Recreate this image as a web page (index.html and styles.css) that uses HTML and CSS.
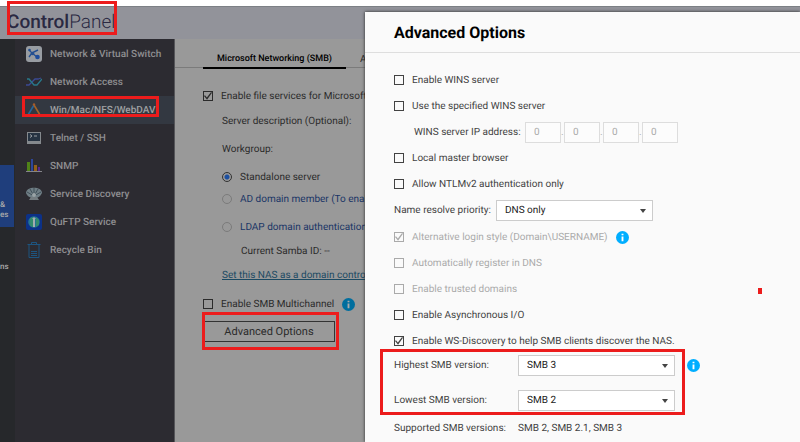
FILE: index.html
```html
<!DOCTYPE html>
<html lang="en">
<head>
<meta charset="UTF-8">
<meta name="viewport" content="width=device-width, initial-scale=1.0">
<title>Control Panel</title>
<link rel="stylesheet" href="styles.css">
</head>
<body>

<header class="topbar">
  <h1 class="brand"><b>Control</b>Panel</h1>
  <div class="mark mark-brand"></div>
</header>

<div class="layout">
  <div class="rail">
    <div class="rail-item active"><span>&amp;</span><span>es</span></div>
    <div class="rail-item"><span>ns</span></div>
  </div>

  <nav class="sidebar">
    <a class="nav-item" href="#">
      <svg class="icon" viewBox="0 0 16 16"><rect width="16" height="16" rx="3" fill="#989ca2"/><path d="M3 4l3 3 6-3M6 7l-3 4M6 7l5 4" fill="none" stroke="#244f91" stroke-width="1.4"/><circle cx="3.500" cy="4" r="1.300" fill="#244f91"/><circle cx="6.500" cy="7.500" r="1.800" fill="#244f91"/><circle cx="11.500" cy="11" r="2.300" fill="#1d4c9c"/></svg>
      Network &amp; Virtual Switch
    </a>
    <a class="nav-item" href="#">
      <svg class="icon" viewBox="0 0 16 16" fill="none" stroke-width="1.300"><path d="M0 11h3l6-6h3l3-1" stroke="#3b4a94"/><path d="M1 5h2l5 6h3l5-6" stroke="#28798a"/></svg>
      Network Access
    </a>
    <a class="nav-item selected" href="#">
      <svg class="icon" viewBox="0 0 16 16" fill="none" stroke-width="1.600"><path d="M8 3L2 13" stroke="#27659a"/><path d="M8 3l6 10" stroke="#a46227"/><path d="M2 13.500h12" stroke="#3c8355"/><circle cx="8" cy="2.500" r="1.200" fill="#a65a2b"/><circle cx="2" cy="13.500" r="1.200" fill="#2867a0"/><circle cx="14" cy="13.500" r="1.200" fill="#a38023"/></svg>
      Win/Mac/NFS/WebDAV
      <span class="mark mark-nav"></span>
    </a>
    <a class="nav-item" href="#">
      <svg class="icon" viewBox="0 0 16 16"><path d="M1 2h14v12H1z" fill="#85898d"/><path d="M2 3h12v8H2z" fill="#263342"/><path d="M4 4.500l2 1.500-2 1.500M8 6h3" fill="none" stroke="#9b9fa4"/></svg>
      Telnet / SSH
    </a>
    <a class="nav-item" href="#">
      <svg class="icon" viewBox="0 0 16 16"><path d="M1 4h3v9H1z" fill="#4f8218"/><path d="M5 1h2v12H5z" fill="#2d469b"/><path d="M8 7h3v6H8z" fill="#946019"/><path d="M12 9h2v4h-2z" fill="#582691"/><path d="M0 13h16v1H0z" fill="#85858a"/></svg>
      SNMP
    </a>
    <a class="nav-item" href="#">
      <svg class="icon" viewBox="0 0 16 16"><path d="M0 7c0-7 16-7 16 0-2 4-4 5-8 5S1 10 0 7z" fill="#6f7e85"/><path d="M8 10L1 6M8 10L4 3M8 10V2M8 10l4-7M8 10l7-4" stroke="#415059" fill="none"/><circle cx="8" cy="9" r="2" fill="#9aa3a6"/><path d="M5 11h6l2 3H3z" fill="#747c80"/></svg>
      Service Discovery
    </a>
    <a class="nav-item" href="#">
      <svg class="icon" viewBox="0 0 16 16"><rect width="16" height="16" rx="2" fill="#0c3188"/><circle cx="8" cy="8" r="5.800" fill="#257593"/><path d="M4 4l3-1v10l-3-1zM10 3l3 3v5l-3 2z" fill="#338b6d"/><path d="M8 3l2 2H9v8H7V5H6z" fill="#a1acaf"/></svg>
      QuFTP Service
    </a>
    <a class="nav-item" href="#">
      <svg class="icon" viewBox="0 0 16 16" fill="none" stroke="#1d5580"><path d="M1.500 2.500h13M5.500 2V.5h5V2M3 3v12.500h10V3"/><path d="M5 9.500h6M5 11.500h6M5 13.500h6"/></svg>
      Recycle Bin
    </a>
  </nav>

  <main class="content">
    <div class="tabs">
      <button class="tab current">Microsoft Networking (SMB)</button>
      <button class="tab">Apple Networking</button>
    </div>
    <form class="share-form">
      <label class="check services"><input type="checkbox" checked>Enable file services for Microsoft Networking</label>
      <div class="field">Server description (Optional):</div>
      <div class="field">Workgroup:</div>
      <label class="choice"><input type="radio" name="role" checked>Standalone server</label>
      <label class="choice blue"><input type="radio" name="role">AD domain member (To enable)</label>
      <label class="choice blue ldap"><input type="radio" name="role">LDAP domain authentication</label>
      <div class="samba">Current Samba ID: --</div>
      <a class="domain-link" href="#">Set this NAS as a domain controller</a>
      <div class="multi">
        <label class="check"><input type="checkbox">Enable SMB Multichannel</label>
        <svg class="info" viewBox="0 0 14 14"><circle cx="7" cy="7" r="7" fill="#006e9e"/><path d="M6 3h2v1.500H6zM6 6h2v5H6z" fill="#aaa"/></svg>
      </div>
      <div class="advanced">
        <button type="button" class="advanced-button">Advanced Options</button>
        <div class="mark mark-advanced"></div>
      </div>
    </form>
  </main>
</div>

<section class="dialog" role="dialog" aria-labelledby="dialog-title">
  <h2 class="dialog-title" id="dialog-title">Advanced Options</h2>
  <form class="options">
    <label class="check row"><input type="checkbox">Enable WINS server</label>
    <label class="check row"><input type="checkbox">Use the specified WINS server</label>
    <div class="row ip-row">
      <label for="ip-1">WINS server IP address:</label>
      <div class="ip">
        <input id="ip-1" type="text" value="0" disabled><span>.</span><input type="text" value="0" aria-label="Second part" disabled><span>.</span><input type="text" value="0" aria-label="Third part" disabled><span>.</span><input type="text" value="0" aria-label="Fourth part" disabled>
      </div>
    </div>
    <label class="check row"><input type="checkbox">Local master browser</label>
    <label class="check row"><input type="checkbox">Allow NTLMv2 authentication only</label>
    <div class="row name-row">
      <label for="priority">Name resolve priority:</label>
      <div class="select"><select id="priority"><option>DNS only</option></select></div>
    </div>
    <div class="row">
      <label class="check off"><input type="checkbox" checked disabled>Alternative login style (Domain\USERNAME)</label>
      <svg class="info" viewBox="0 0 14 14"><circle cx="7" cy="7" r="7" fill="#00aeff"/><path d="M6 3h2v1.500H6zM6 6h2v5H6z" fill="#fff"/></svg>
    </div>
    <label class="check row off"><input type="checkbox" disabled>Automatically register in DNS</label>
    <label class="check row off"><input type="checkbox" disabled>Enable trusted domains</label>
    <label class="check row"><input type="checkbox">Enable Asynchronous I/O</label>
    <label class="check row"><input type="checkbox" checked>Enable WS-Discovery to help SMB clients discover the NAS.</label>
    <div class="versions">
      <div class="version">
        <label for="highest">Highest SMB version:</label>
        <div class="select"><select id="highest"><option>SMB 3</option></select></div>
        <svg class="info" viewBox="0 0 14 14"><circle cx="7" cy="7" r="7" fill="#00aeff"/><path d="M6 3h2v1.500H6zM6 6h2v5H6z" fill="#fff"/></svg>
      </div>
      <div class="version">
        <label for="lowest">Lowest SMB version:</label>
        <div class="select"><select id="lowest"><option>SMB 2</option></select></div>
      </div>
      <div class="mark mark-versions"></div>
    </div>
    <div class="version supported"><span class="version-name">Supported SMB versions:</span><span>SMB 2, SMB 2.1, SMB 3</span></div>
  </form>
  <div class="red-dot"></div>
</section>

</body>
</html>
```
FILE: styles.css
```css
* {
  box-sizing: border-box;
}

body {
  position: relative;
  display: flex;
  flex-direction: column;
  height: 100vh;
  margin: 0;
  padding-top: 6px;
  overflow: hidden;
  background: #fff;
  color: #424242;
  font: 10px/15px Roboto, "Liberation Sans", sans-serif;
  text-rendering: geometricPrecision;
  white-space: nowrap;
}

button, input, select {
  margin: 0;
  font: inherit;
  color: inherit;
  text-rendering: inherit;
}

/* red highlight frames */
.mark {
  position: absolute;
  border: 3px solid #ec1c1c;
  pointer-events: none;
}

.topbar {
  position: relative;
  flex: none;
  height: 33px;
  padding-left: 7px;
  border-top: 1px solid #7c8085;
  background: #92939a;
}

.brand {
  margin: 0;
  color: #2a2942;
  font-size: 19px;
  font-weight: 300;
  line-height: 30px;
}

.brand b {
  font-weight: 500;
}

.mark-brand {
  top: -6px;
  left: 7px;
  width: 110px;
  height: 34px;
}

.layout {
  display: flex;
  flex: 1;
  min-height: 0;
}

.rail {
  flex: none;
  width: 15px;
  padding-top: 126px;
  overflow: hidden;
  background: #26282b;
  color: #aaa;
  font-size: 8px;
  font-weight: 500;
  line-height: 10px;
}

.rail-item {
  display: flex;
  flex-direction: column;
  align-items: flex-start;
  justify-content: flex-end;
  width: 14px;
  height: 45px;
}

.rail-item.active {
  height: 62px;
  padding-bottom: 7px;
  background: #1f3e7c;
}

.sidebar {
  flex: none;
  width: 160px;
  padding-top: 1px;
  border-right: 1px solid #555559;
  background: #2c2b31;
}

.nav-item {
  position: relative;
  display: flex;
  align-items: center;
  gap: 8px;
  height: 28px;
  padding-left: 11px;
  color: #8f8f91;
  font-weight: 500;
  text-decoration: none;
}

.nav-item.selected {
  background: #333841;
  color: #a0a1a3;
}

.icon {
  width: 16px;
  height: 16px;
}

.mark-nav {
  top: 0;
  left: 7px;
  width: 137px;
  height: 21px;
}

.content {
  flex: 1;
  min-width: 0;
  overflow: hidden;
  background: #999;
  color: #2b2b2b;
}

.tabs {
  display: flex;
  height: 29px;
  padding: 0 28px;
  border-bottom: 1px solid #7b7b7b;
}

.tab {
  height: 30px;
  padding: 12px 14px 0;
  border: 0;
  border-bottom: 2px solid transparent;
  background: none;
}

.tab.current {
  border-color: #000;
  color: #000;
  font-size: 9px;
  font-weight: 500;
}

.share-form {
  display: flex;
  flex-direction: column;
  align-items: flex-start;
  padding: 14px 28px 0;
}

.check {
  display: flex;
  align-items: center;
  gap: 8px;
}

input[type="checkbox"] {
  flex: none;
  width: 10px;
  height: 10px;
  appearance: none;
  border: 1px solid currentColor;
}

input[type="checkbox"]:checked::before {
  content: "";
  display: block;
  width: 8px;
  height: 8px;
  background: currentColor;
  clip-path: polygon(0 50%, 12% 40%, 36% 70%, 88% 0, 100% 8%, 38% 96%);
}

.services {
  height: 28px;
}

.field {
  height: 28px;
  padding-left: 19px;
  line-height: 24px;
}

.choice {
  display: flex;
  align-items: center;
  gap: 8px;
  height: 22px;
  padding-left: 19px;
}

.choice.blue {
  color: #1a3566;
}

.choice.ldap {
  height: 34px;
}

input[type="radio"] {
  width: 10px;
  height: 10px;
  appearance: none;
  border: 1px solid #7b7b7b;
  border-radius: 50%;
}

input[type="radio"]:checked {
  border-color: #333;
  background: radial-gradient(circle, #1c4fa0 2px, transparent 3px);
}

.samba {
  padding-left: 38px;
}

.domain-link {
  margin: 9px 0 13px 19px;
  color: #1c4a63;
}

.multi {
  display: flex;
  align-items: center;
  gap: 8px;
  height: 16px;
}

.info {
  flex: none;
  width: 13px;
  height: 13px;
}

.advanced {
  position: relative;
  padding-top: 9px;
}

.advanced-button {
  width: 132px;
  height: 21px;
  padding: 0;
  border: 1px solid #333;
  background: none;
  font-size: 11px;
}

.mark-advanced {
  top: 0;
  left: -1px;
  width: 137px;
  height: 38px;
}

/* dialog over the page */
.dialog {
  position: absolute;
  top: 12px;
  right: 0;
  bottom: 0;
  left: 365px;
  background: #fafafa;
  box-shadow: 0 0 3px #222;
}

.dialog-title {
  height: 41px;
  margin: 0;
  padding-left: 29px;
  border-bottom: 1px solid #dedede;
  color: #000;
  font-size: 16px;
  font-weight: 700;
  line-height: 41px;
}

.options {
  padding: 14px 29px 0;
}

.row {
  display: flex;
  align-items: center;
  height: 26px;
}

.row .info {
  margin-left: 8px;
}

.off {
  color: #aaa;
}

.ip-row {
  padding-left: 20px;
}

.ip-row label {
  width: 111px;
}

.ip {
  display: flex;
  align-items: center;
  color: #aaa;
}

.ip input {
  width: 36px;
  height: 21px;
  padding: 0 8px;
  border: 1px solid #ddd;
  background: #fcfcfc;
}

.ip span {
  width: 3px;
}

.name-row {
  height: 27px;
}

.name-row label {
  width: 102px;
}

.select {
  position: relative;
  width: 157px;
}

.select::after {
  content: "";
  position: absolute;
  top: 9px;
  right: 7px;
  border: 3px solid transparent;
  border-top: 4px solid #444;
  border-bottom: 0;
  pointer-events: none;
}

.select select {
  display: block;
  width: 100%;
  height: 21px;
  padding: 0 8px;
  appearance: none;
  border: 1px solid #ccc;
  border-radius: 0;
  background: #fff;
  color: #222;
}

.versions {
  position: relative;
  display: flex;
  flex-direction: column;
  gap: 14px;
  padding-top: 1px;
}

.version {
  display: flex;
  align-items: center;
}

.version label,
.version-name {
  flex: none;
  width: 124px;
}

.version .info {
  margin-left: 12px;
}

.supported {
  padding-top: 10px;
}

.mark-versions {
  top: -5px;
  left: -14px;
  width: 305px;
  height: 66px;
}

.red-dot {
  position: absolute;
  top: 276px;
  right: 38px;
  width: 4px;
  height: 6px;
  background: #ec1c1c;
}
```
